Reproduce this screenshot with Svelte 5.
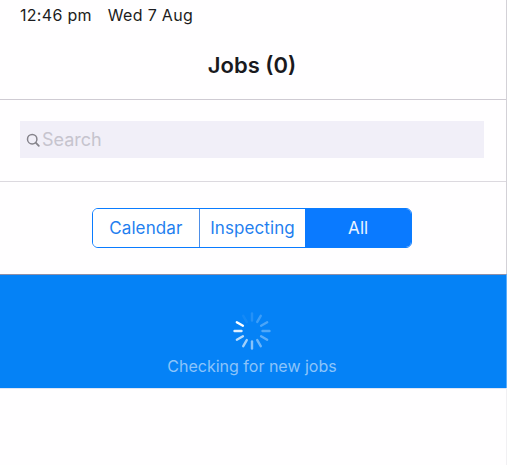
<script lang="ts">
  const tabs = ['Calendar', 'Inspecting', 'All'];
  let active = $state('All');

  // spoke opacity per position, clockwise from the top; the head sits at 10 o'clock
  const spokes = [0.12, 0.22, 0.28, 0.3, 0.35, 0.42, 0.52, 0.62, 0.72, 0.88, 1, 0.06];
</script>

<div class="screen">
  <div class="status">
    <span>12:46 pm</span>
    <span>Wed 7 Aug</span>
  </div>

  <header class="nav">
    <h1>Jobs (0)</h1>
  </header>

  <div class="search-wrap">
    <label class="search">
      <svg viewBox="0 0 14 14" width="14" height="14" aria-hidden="true">
        <circle cx="6.2" cy="6.2" r="4.7" fill="none" stroke="#85838b" stroke-width="1.5" />
        <path d="M9.7 9.7 12.8 12.8" stroke="#85838b" stroke-width="1.8" stroke-linecap="round" />
      </svg>
      <input placeholder="Search" aria-label="Search" />
    </label>
  </div>

  <div class="tabs-wrap">
    <div class="tabs">
      {#each tabs as tab (tab)}
        <button class:active={active === tab} onclick={() => (active = tab)}>{tab}</button>
      {/each}
    </div>
  </div>

  <section class="checking">
    <svg class="spinner" viewBox="-19 -19 38 38" width="38" height="38" aria-hidden="true">
      {#each spokes as opacity, index}
        <line
          x1="0"
          y1="-10.5"
          x2="0"
          y2="-17.5"
          stroke="#fff"
          stroke-width="2.4"
          stroke-linecap="round"
          {opacity}
          transform="rotate({index * 30})"
        />
      {/each}
    </svg>
    <p>Checking for new jobs</p>
  </section>
</div>

<style>
  :global(body) {
    margin: 0;
    background: #fff;
  }
  .screen {
    position: relative;
    width: 507px;
    height: 465px;
    overflow: hidden;
    background: #fffeff;
    font-family: Inter, 'Liberation Sans', sans-serif;
  }
  /* thin edge line down the right side of the capture */
  .screen::after {
    content: '';
    position: absolute;
    top: 0;
    right: 0;
    bottom: 0;
    width: 1px;
    background: linear-gradient(
      #d3d1d7 0 274px,
      #5aaefc 274px 388px,
      #f1f0f3 388px
    );
  }
  .status {
    display: flex;
    gap: 16px;
    height: 31px;
    box-sizing: border-box;
    padding: 6px 0 0 20px;
    font-size: 16px;
    letter-spacing: 0.3px;
    line-height: 18px;
    color: #1c1c20;
  }
  .nav {
    display: flex;
    align-items: center;
    justify-content: center;
    height: 69px;
    box-sizing: border-box;
    padding-right: 3px;
    border-bottom: 1px solid #cfcbd3;
  }
  .nav h1 {
    margin: 0;
    font-size: 22px;
    font-weight: 600;
    color: #19191d;
  }
  .search-wrap {
    height: 82px;
    box-sizing: border-box;
    padding: 21px 23px 0 20px;
    border-bottom: 1px solid #dcd9df;
  }
  .search {
    display: flex;
    align-items: center;
    gap: 2px;
    height: 37px;
    padding-left: 6px;
    background: #f1eff8;
  }
  .search input {
    flex: 1;
    min-width: 0;
    padding: 0;
    border: 0;
    outline: 0;
    background: none;
    font: inherit;
    font-size: 18px;
  }
  .search input::placeholder {
    color: #c6c4ce;
    opacity: 1;
  }
  .tabs-wrap {
    display: flex;
    justify-content: center;
    height: 93px;
    box-sizing: border-box;
    padding: 26px 3px 0 0;
    border-bottom: 1px solid #8f8fa8;
  }
  .tabs {
    display: flex;
    width: 320px;
    height: 40px;
    box-sizing: border-box;
    overflow: hidden;
    border: 1.5px solid #0a7cff;
    border-radius: 6px;
  }
  .tabs button {
    flex: 1;
    padding: 0;
    border: 0;
    border-left: 1.5px solid #4d8fe8;
    background: #fff;
    color: #1f7fef;
    font: inherit;
    font-size: 17px;
    letter-spacing: 0.1px;
  }
  .tabs button:first-child {
    border-left: 0;
  }
  .tabs button.active {
    border-left: 0;
    background: #0a7aff;
    color: #eaf4ff;
  }
  .checking {
    display: flex;
    flex-direction: column;
    align-items: center;
    height: 114px;
    box-sizing: border-box;
    padding: 37px 3px 0 0;
    background: #0582f6;
    border-bottom: 1px solid #dfe6f5;
  }
  .spinner {
    display: block;
  }
  .checking p {
    margin: 6px 0 0;
    font-size: 16px;
    line-height: 20px;
    color: #8cc4fa;
  }
</style>
